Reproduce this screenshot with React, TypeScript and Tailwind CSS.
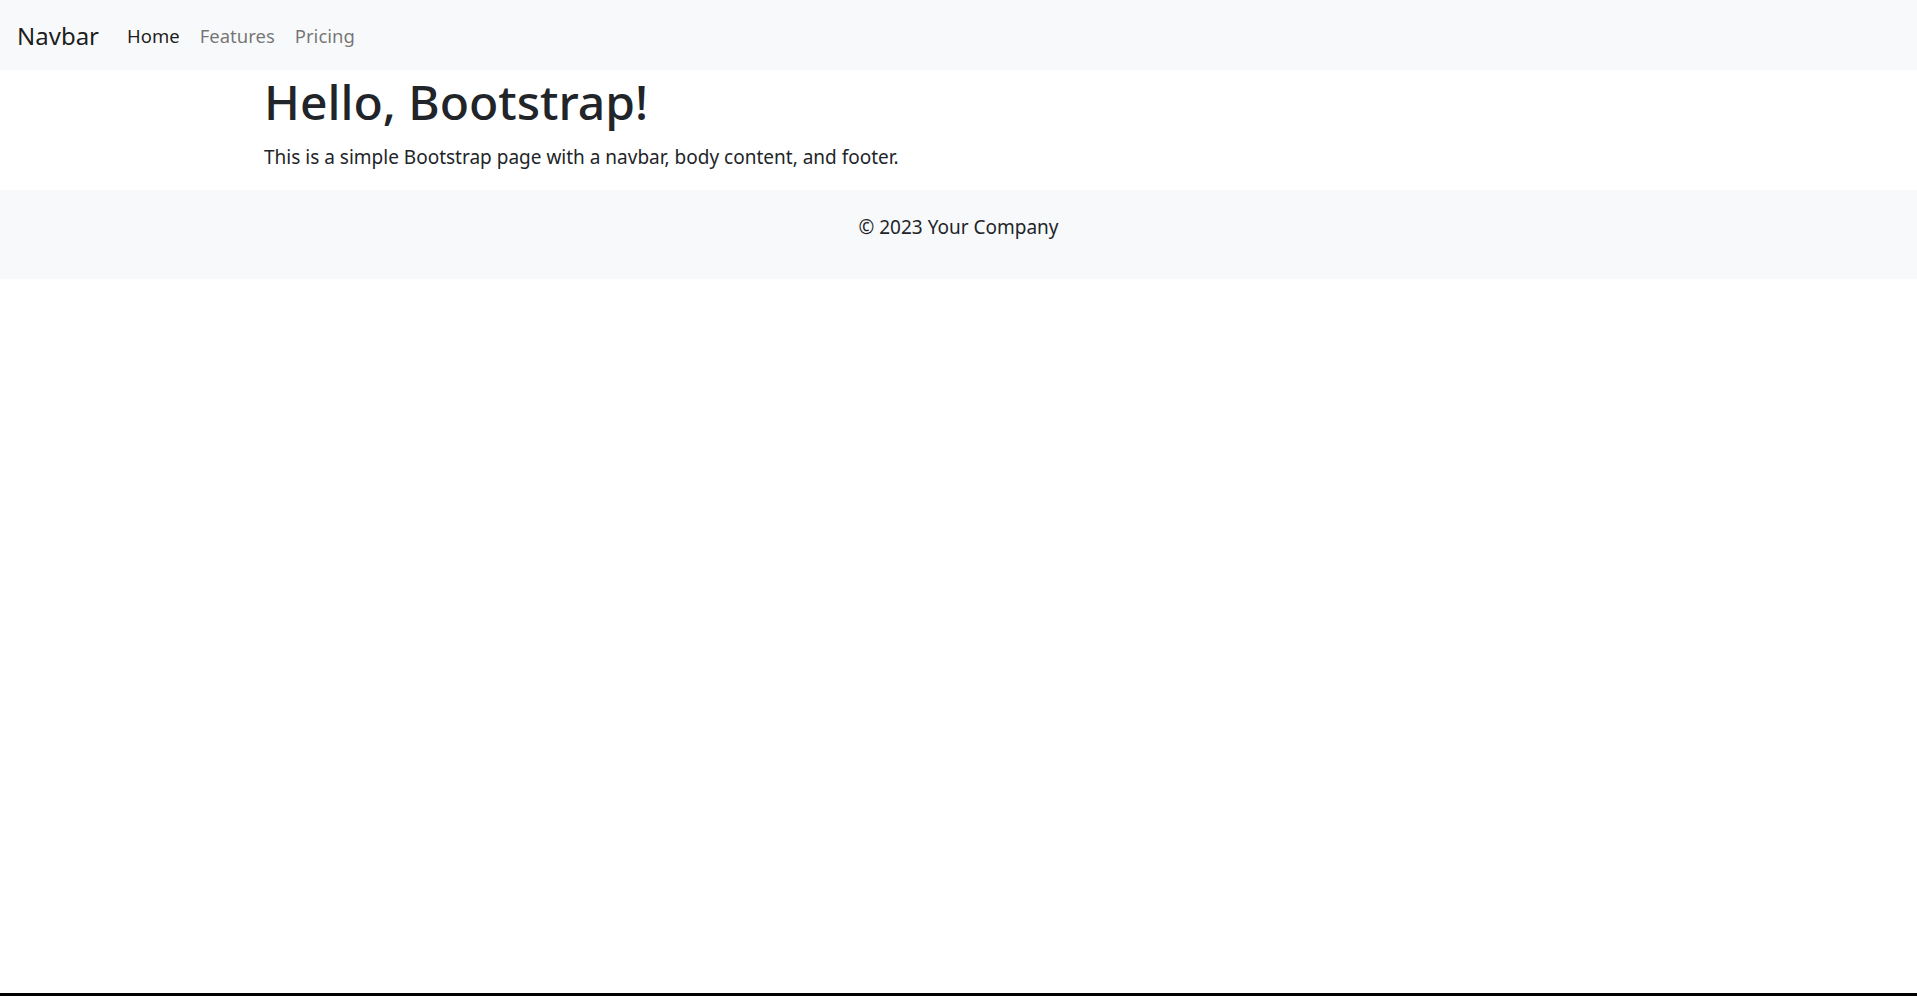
export default function App() {
  return (
    <div className="flex h-[996px] flex-col bg-white text-[#212529]" style={{ fontFamily: "'Noto Sans', sans-serif" }}>
      <nav className="flex h-[70px] items-center bg-[#f8f9fa] px-[17px] pt-[2px]">
        <span className="text-[24px] leading-[36px] text-black/90">Navbar</span>
        <div className="ml-[28px] flex gap-[20px] text-[18.5px] leading-[28px]">
          <span className="text-black/90">Home</span>
          <span className="text-black/55">Features</span>
          <span className="text-black/55">Pricing</span>
        </div>
      </nav>
      <main className="h-[120px] px-[264px] pt-[3px]">
        <h1 className="text-[48px] font-medium leading-[57px]">Hello, Bootstrap!</h1>
        <p className="mt-[13px] text-[19px] leading-[28px]">
          This is a simple Bootstrap page with a navbar, body content, and footer.
        </p>
      </main>
      <footer className="flex h-[89px] justify-center bg-[#f8f9fa] pt-[23px] text-[19px] leading-[28px]">
        © 2023 Your Company
      </footer>
      <div className="flex-1" />
      <div className="h-[3px] bg-black" />
    </div>
  );
}
